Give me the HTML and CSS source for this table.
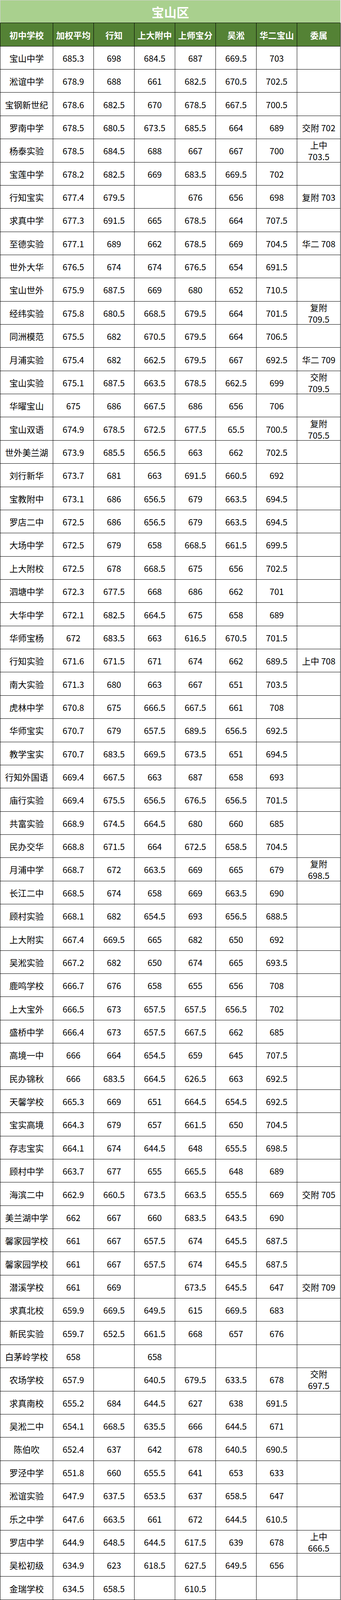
FILE: index.html
```html
<!DOCTYPE html>
<html lang="zh-CN">
<head>
<meta charset="utf-8">
<title>宝山区</title>
<link rel="stylesheet" href="styles.css">
</head>
<body>
<div class="sheet">
  <div class="title">宝山区</div>
  <div class="row head"><div class="c n">初中学校</div><div class="c">加权平均</div><div class="c">行知</div><div class="c">上大附中</div><div class="c">上师宝分</div><div class="c">吴淞</div><div class="c">华二宝山</div><div class="c m">委属</div></div>
  <div class="row"><div class="c n">宝山中学</div><div class="c">685.3</div><div class="c">698</div><div class="c">684.5</div><div class="c">687</div><div class="c">669.5</div><div class="c">703</div><div class="c m"></div></div>
  <div class="row"><div class="c n">淞谊中学</div><div class="c">678.9</div><div class="c">688</div><div class="c">661</div><div class="c">682.5</div><div class="c">670.5</div><div class="c">702.5</div><div class="c m"></div></div>
  <div class="row"><div class="c n">宝钢新世纪</div><div class="c">678.6</div><div class="c">682.5</div><div class="c">670</div><div class="c">678.5</div><div class="c">667.5</div><div class="c">700.5</div><div class="c m"></div></div>
  <div class="row"><div class="c n">罗南中学</div><div class="c">678.5</div><div class="c">680.5</div><div class="c">673.5</div><div class="c">685.5</div><div class="c">664</div><div class="c">689</div><div class="c m">交附 702</div></div>
  <div class="row"><div class="c n">杨泰实验</div><div class="c">678.5</div><div class="c">684.5</div><div class="c">688</div><div class="c">667</div><div class="c">667</div><div class="c">700</div><div class="c m">上中 703.5</div></div>
  <div class="row"><div class="c n">宝莲中学</div><div class="c">678.2</div><div class="c">682.5</div><div class="c">669</div><div class="c">683.5</div><div class="c">669.5</div><div class="c">702</div><div class="c m"></div></div>
  <div class="row"><div class="c n">行知宝实</div><div class="c">677.4</div><div class="c">679.5</div><div class="c"></div><div class="c">676</div><div class="c">656</div><div class="c">698</div><div class="c m">复附 703</div></div>
  <div class="row"><div class="c n">求真中学</div><div class="c">677.3</div><div class="c">691.5</div><div class="c">665</div><div class="c">678.5</div><div class="c">664</div><div class="c">707.5</div><div class="c m"></div></div>
  <div class="row"><div class="c n">至德实验</div><div class="c">677.1</div><div class="c">689</div><div class="c">662</div><div class="c">678.5</div><div class="c">669</div><div class="c">704.5</div><div class="c m">华二 708</div></div>
  <div class="row"><div class="c n">世外大华</div><div class="c">676.5</div><div class="c">674</div><div class="c">674</div><div class="c">676.5</div><div class="c">654</div><div class="c">691.5</div><div class="c m"></div></div>
  <div class="row"><div class="c n">宝山世外</div><div class="c">675.9</div><div class="c">687.5</div><div class="c">669</div><div class="c">680</div><div class="c">652</div><div class="c">710.5</div><div class="c m"></div></div>
  <div class="row"><div class="c n">经纬实验</div><div class="c">675.8</div><div class="c">680.5</div><div class="c">668.5</div><div class="c">679.5</div><div class="c">664</div><div class="c">701.5</div><div class="c m">复附 709.5</div></div>
  <div class="row"><div class="c n">同洲模范</div><div class="c">675.5</div><div class="c">682</div><div class="c">670.5</div><div class="c">679.5</div><div class="c">664</div><div class="c">706.5</div><div class="c m"></div></div>
  <div class="row"><div class="c n">月浦实验</div><div class="c">675.4</div><div class="c">682</div><div class="c">662.5</div><div class="c">679.5</div><div class="c">667</div><div class="c">692.5</div><div class="c m">华二 709</div></div>
  <div class="row"><div class="c n">宝山实验</div><div class="c">675.1</div><div class="c">687.5</div><div class="c">663.5</div><div class="c">678.5</div><div class="c">662.5</div><div class="c">699</div><div class="c m">交附 709.5</div></div>
  <div class="row"><div class="c n">华曜宝山</div><div class="c">675</div><div class="c">686</div><div class="c">667.5</div><div class="c">686</div><div class="c">656</div><div class="c">706</div><div class="c m"></div></div>
  <div class="row"><div class="c n">宝山双语</div><div class="c">674.9</div><div class="c">678.5</div><div class="c">672.5</div><div class="c">677.5</div><div class="c">65.5</div><div class="c">700.5</div><div class="c m">复附 705.5</div></div>
  <div class="row"><div class="c n">世外美兰湖</div><div class="c">673.9</div><div class="c">685.5</div><div class="c">656.5</div><div class="c">663</div><div class="c">662</div><div class="c">702.5</div><div class="c m"></div></div>
  <div class="row"><div class="c n">刘行新华</div><div class="c">673.7</div><div class="c">681</div><div class="c">663</div><div class="c">691.5</div><div class="c">660.5</div><div class="c">692</div><div class="c m"></div></div>
  <div class="row"><div class="c n">宝教附中</div><div class="c">673.1</div><div class="c">686</div><div class="c">656.5</div><div class="c">679</div><div class="c">663.5</div><div class="c">694.5</div><div class="c m"></div></div>
  <div class="row"><div class="c n">罗店二中</div><div class="c">672.5</div><div class="c">686</div><div class="c">656.5</div><div class="c">679</div><div class="c">663.5</div><div class="c">694.5</div><div class="c m"></div></div>
  <div class="row"><div class="c n">大场中学</div><div class="c">672.5</div><div class="c">679</div><div class="c">658</div><div class="c">668.5</div><div class="c">661.5</div><div class="c">699.5</div><div class="c m"></div></div>
  <div class="row"><div class="c n">上大附校</div><div class="c">672.5</div><div class="c">678</div><div class="c">668.5</div><div class="c">675</div><div class="c">656</div><div class="c">702.5</div><div class="c m"></div></div>
  <div class="row"><div class="c n">泗塘中学</div><div class="c">672.3</div><div class="c">677.5</div><div class="c">668</div><div class="c">686</div><div class="c">662</div><div class="c">701</div><div class="c m"></div></div>
  <div class="row"><div class="c n">大华中学</div><div class="c">672.1</div><div class="c">682.5</div><div class="c">664.5</div><div class="c">675</div><div class="c">658</div><div class="c">689</div><div class="c m"></div></div>
  <div class="row"><div class="c n">华师宝杨</div><div class="c">672</div><div class="c">683.5</div><div class="c">663</div><div class="c">616.5</div><div class="c">670.5</div><div class="c">701.5</div><div class="c m"></div></div>
  <div class="row"><div class="c n">行知实验</div><div class="c">671.6</div><div class="c">671.5</div><div class="c">671</div><div class="c">674</div><div class="c">662</div><div class="c">689.5</div><div class="c m">上中 708</div></div>
  <div class="row"><div class="c n">南大实验</div><div class="c">671.3</div><div class="c">680</div><div class="c">663</div><div class="c">667</div><div class="c">651</div><div class="c">703.5</div><div class="c m"></div></div>
  <div class="row"><div class="c n">虎林中学</div><div class="c">670.8</div><div class="c">675</div><div class="c">666.5</div><div class="c">667.5</div><div class="c">661</div><div class="c">708</div><div class="c m"></div></div>
  <div class="row"><div class="c n">华师宝实</div><div class="c">670.7</div><div class="c">679</div><div class="c">657.5</div><div class="c">689.5</div><div class="c">656.5</div><div class="c">692.5</div><div class="c m"></div></div>
  <div class="row"><div class="c n">教学宝实</div><div class="c">670.7</div><div class="c">683.5</div><div class="c">669.5</div><div class="c">673.5</div><div class="c">651</div><div class="c">694.5</div><div class="c m"></div></div>
  <div class="row"><div class="c n">行知外国语</div><div class="c">669.4</div><div class="c">667.5</div><div class="c">663</div><div class="c">687</div><div class="c">658</div><div class="c">693</div><div class="c m"></div></div>
  <div class="row"><div class="c n">庙行实验</div><div class="c">669.4</div><div class="c">675.5</div><div class="c">656.5</div><div class="c">676.5</div><div class="c">656.5</div><div class="c">701.5</div><div class="c m"></div></div>
  <div class="row"><div class="c n">共富实验</div><div class="c">668.9</div><div class="c">674.5</div><div class="c">664.5</div><div class="c">680</div><div class="c">660</div><div class="c">685</div><div class="c m"></div></div>
  <div class="row"><div class="c n">民办交华</div><div class="c">668.8</div><div class="c">671.5</div><div class="c">664</div><div class="c">672.5</div><div class="c">658.5</div><div class="c">704.5</div><div class="c m"></div></div>
  <div class="row"><div class="c n">月浦中学</div><div class="c">668.7</div><div class="c">672</div><div class="c">663.5</div><div class="c">669</div><div class="c">665</div><div class="c">679</div><div class="c m">复附 698.5</div></div>
  <div class="row"><div class="c n">长江二中</div><div class="c">668.5</div><div class="c">674</div><div class="c">658</div><div class="c">669</div><div class="c">663.5</div><div class="c">690</div><div class="c m"></div></div>
  <div class="row"><div class="c n">顾村实验</div><div class="c">668.1</div><div class="c">682</div><div class="c">654.5</div><div class="c">693</div><div class="c">656.5</div><div class="c">688.5</div><div class="c m"></div></div>
  <div class="row"><div class="c n">上大附实</div><div class="c">667.4</div><div class="c">669.5</div><div class="c">665</div><div class="c">682</div><div class="c">650</div><div class="c">692</div><div class="c m"></div></div>
  <div class="row"><div class="c n">吴淞实验</div><div class="c">667.2</div><div class="c">682</div><div class="c">650</div><div class="c">674</div><div class="c">665</div><div class="c">693.5</div><div class="c m"></div></div>
  <div class="row"><div class="c n">鹿鸣学校</div><div class="c">666.7</div><div class="c">676</div><div class="c">658</div><div class="c">655</div><div class="c">656</div><div class="c">708</div><div class="c m"></div></div>
  <div class="row"><div class="c n">上大宝外</div><div class="c">666.5</div><div class="c">673</div><div class="c">657.5</div><div class="c">657.5</div><div class="c">656.5</div><div class="c">702</div><div class="c m"></div></div>
  <div class="row"><div class="c n">盛桥中学</div><div class="c">666.4</div><div class="c">673</div><div class="c">657.5</div><div class="c">667.5</div><div class="c">662</div><div class="c">685</div><div class="c m"></div></div>
  <div class="row"><div class="c n">高境一中</div><div class="c">666</div><div class="c">664</div><div class="c">654.5</div><div class="c">659</div><div class="c">645</div><div class="c">707.5</div><div class="c m"></div></div>
  <div class="row"><div class="c n">民办锦秋</div><div class="c">666</div><div class="c">683.5</div><div class="c">664.5</div><div class="c">626.5</div><div class="c">663</div><div class="c">692.5</div><div class="c m"></div></div>
  <div class="row"><div class="c n">天馨学校</div><div class="c">665.3</div><div class="c">669</div><div class="c">651</div><div class="c">664.5</div><div class="c">654.5</div><div class="c">692.5</div><div class="c m"></div></div>
  <div class="row"><div class="c n">宝实高境</div><div class="c">664.3</div><div class="c">679</div><div class="c">657</div><div class="c">661.5</div><div class="c">650</div><div class="c">704.5</div><div class="c m"></div></div>
  <div class="row"><div class="c n">存志宝实</div><div class="c">664.1</div><div class="c">674</div><div class="c">644.5</div><div class="c">648</div><div class="c">655.5</div><div class="c">698.5</div><div class="c m"></div></div>
  <div class="row"><div class="c n">顾村中学</div><div class="c">663.7</div><div class="c">677</div><div class="c">655</div><div class="c">665.5</div><div class="c">648</div><div class="c">689</div><div class="c m"></div></div>
  <div class="row"><div class="c n">海滨二中</div><div class="c">662.9</div><div class="c">660.5</div><div class="c">673.5</div><div class="c">663.5</div><div class="c">655.5</div><div class="c">669</div><div class="c m">交附 705</div></div>
  <div class="row"><div class="c n">美兰湖中学</div><div class="c">662</div><div class="c">667</div><div class="c">660</div><div class="c">683.5</div><div class="c">643.5</div><div class="c">690</div><div class="c m"></div></div>
  <div class="row"><div class="c n">馨家园学校</div><div class="c">661</div><div class="c">667</div><div class="c">657.5</div><div class="c">674</div><div class="c">645.5</div><div class="c">687.5</div><div class="c m"></div></div>
  <div class="row"><div class="c n">馨家园学校</div><div class="c">661</div><div class="c">667</div><div class="c">657.5</div><div class="c">674</div><div class="c">645.5</div><div class="c">687.5</div><div class="c m"></div></div>
  <div class="row"><div class="c n">潜溪学校</div><div class="c">661</div><div class="c">669</div><div class="c"></div><div class="c">673.5</div><div class="c">645.5</div><div class="c">647</div><div class="c m">交附 709</div></div>
  <div class="row"><div class="c n">求真北校</div><div class="c">659.9</div><div class="c">669.5</div><div class="c">649.5</div><div class="c">615</div><div class="c">669.5</div><div class="c">683</div><div class="c m"></div></div>
  <div class="row"><div class="c n">新民实验</div><div class="c">659.7</div><div class="c">652.5</div><div class="c">661.5</div><div class="c">668</div><div class="c">657</div><div class="c">676</div><div class="c m"></div></div>
  <div class="row"><div class="c n">白茅岭学校</div><div class="c">658</div><div class="c"></div><div class="c">658</div><div class="c"></div><div class="c"></div><div class="c"></div><div class="c m"></div></div>
  <div class="row"><div class="c n">农场学校</div><div class="c">657.9</div><div class="c"></div><div class="c">640.5</div><div class="c">679.5</div><div class="c">633.5</div><div class="c">678</div><div class="c m">交附 697.5</div></div>
  <div class="row"><div class="c n">求真南校</div><div class="c">655.2</div><div class="c">684</div><div class="c">644.5</div><div class="c">627</div><div class="c">638</div><div class="c">691.5</div><div class="c m"></div></div>
  <div class="row"><div class="c n">吴淞二中</div><div class="c">654.1</div><div class="c">668.5</div><div class="c">635.5</div><div class="c">666</div><div class="c">644.5</div><div class="c">671</div><div class="c m"></div></div>
  <div class="row"><div class="c n">陈伯吹</div><div class="c">652.4</div><div class="c">637</div><div class="c">642</div><div class="c">678</div><div class="c">640.5</div><div class="c">690.5</div><div class="c m"></div></div>
  <div class="row"><div class="c n">罗泾中学</div><div class="c">651.8</div><div class="c">660</div><div class="c">655.5</div><div class="c">641</div><div class="c">653</div><div class="c">633</div><div class="c m"></div></div>
  <div class="row"><div class="c n">淞谊实验</div><div class="c">647.9</div><div class="c">637.5</div><div class="c">653.5</div><div class="c">637</div><div class="c">658.5</div><div class="c">647</div><div class="c m"></div></div>
  <div class="row"><div class="c n">乐之中学</div><div class="c">647.6</div><div class="c">663.5</div><div class="c">661</div><div class="c">672</div><div class="c">644.5</div><div class="c">610.5</div><div class="c m"></div></div>
  <div class="row"><div class="c n">罗店中学</div><div class="c">644.9</div><div class="c">648.5</div><div class="c">644.5</div><div class="c">617.5</div><div class="c">639</div><div class="c">678</div><div class="c m">上中 666.5</div></div>
  <div class="row"><div class="c n">吴松初级</div><div class="c">634.9</div><div class="c">623</div><div class="c">618.5</div><div class="c">627.5</div><div class="c">649.5</div><div class="c">656</div><div class="c m"></div></div>
  <div class="row"><div class="c n">金瑞学校</div><div class="c">634.5</div><div class="c">658.5</div><div class="c"></div><div class="c">610.5</div><div class="c"></div><div class="c"></div><div class="c m"></div></div>
</div>
</body>
</html>
```

FILE: styles.css
```css
* {
  box-sizing: border-box;
}

html {
  overflow: hidden;
}

html, body {
  margin: 0;
  padding: 0;
  background: #ffffff;
}

body {
  font-family: "Noto Sans CJK SC", "Noto Sans", sans-serif;
  color: #000000;
}

/* 69 rows (title + header + 67 schools) share 4096px of height */
.sheet {
  width: 871px;
  display: grid;
  grid-template-columns: 136px 104px 104px 104px 104px 104px 104px 111px;
  grid-auto-rows: calc(4096px / 69);
}

.title {
  grid-column: 1 / -1;
  display: flex;
  align-items: center;
  justify-content: center;
  background: #a9d08e;
  color: #ffffff;
  font-size: 32px;
  font-weight: 700;
  line-height: 40px;
  border-top: 1px solid #d4d4d4;
  border-left: 1px solid #d4d4d4;
  border-right: 1px solid #d4d4d4;
  border-bottom: 1px solid #000000;
}

.row {
  display: contents;
}

.c {
  display: flex;
  align-items: center;
  justify-content: center;
  text-align: center;
  font-size: 22px;
  line-height: 30px;
  border-right: 1px solid #000000;
  border-bottom: 1px solid #000000;
}

.c.n {
  border-left: 1px solid #000000;
}

.c.m {
  padding: 0 5px;
}

.head .c {
  background: #548235;
  color: #ffffff;
  font-weight: 700;
}
```
